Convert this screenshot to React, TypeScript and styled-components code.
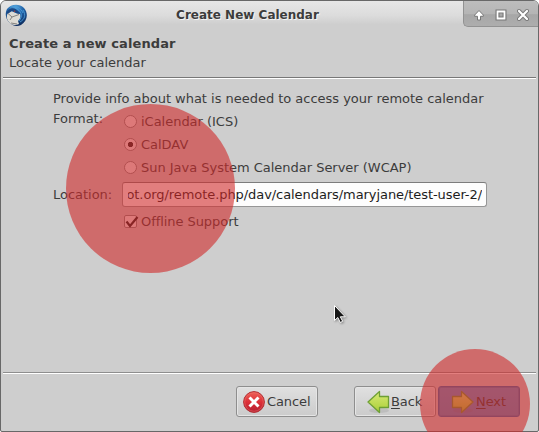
import React from "react";
import styled, { createGlobalStyle } from "styled-components";

const GlobalStyle = createGlobalStyle`
  html, body { margin: 0; padding: 0; background: #fff; overflow: hidden; }
  * { box-sizing: border-box; }
`;

const Stage = styled.div`
  position: relative;
  width: 539px;
  height: 432px;
  overflow: hidden;
`;

const Window = styled.div`
  display: flex;
  flex-direction: column;
  width: 539px;
  height: 432px;
  overflow: hidden;
  border: 1px solid #686868;
  border-radius: 6px 6px 2px 2px;
  background: #cecece;
  color: #3c3c3c;
  font: 13px/16px "DejaVu Sans", sans-serif;
  letter-spacing: -0.02px;
  white-space: nowrap;
`;

const TitleBar = styled.header`
  display: grid;
  grid-template-columns: 74px 1fr 75px;
  height: 26px;
  flex: none;
  background: linear-gradient(#e7e7e7, #dcdcdc 55%, #cecece 90%);
`;

const LogoSlot = styled.div`
  padding: 3px 0 0 4px;
  svg { display: block; }
`;

const Title = styled.div`
  font-size: 12px;
  font-weight: bold;
  line-height: 29px;
  height: 26px;
  letter-spacing: 0;
  text-align: center;
  padding-right: 43px;
  text-shadow: 1px 1px 0 #f4f4f4;
`;

const WindowControls = styled.div`
  display: flex;
  align-items: center;
  height: 26px;
  padding: 2px 0 0 8px;
  border: solid #929292;
  border-width: 0 0 1px 1px;
  border-bottom-left-radius: 5px;
  background: linear-gradient(#bdbdbd, #b5b5b5 50%, #a7a7a7 55%, #adadad);
  svg { flex: none; width: 14px; height: 14px; margin-right: 8px; }
`;

const PageHeader = styled.section`
  height: 50px;
  flex: none;
  padding: 7px 8px 0;
`;

const Heading = styled.div`
  font-weight: bold;
  line-height: 19px;
  letter-spacing: 0.1px;
`;

const Subheading = styled.div`
  line-height: 19px;
`;

const Separator = styled.div<{ $shade: string }>`
  height: 2px;
  flex: none;
  margin: 0 2px;
  border-top: 1px solid ${(p) => p.$shade};
  border-bottom: 1px solid #fff;
`;

const PageBody = styled.main`
  flex: 1;
  padding: 12px 51px 0 52px;
`;

const Intro = styled.div`
  height: 19px;
  line-height: 16px;
`;

const Form = styled.div`
  display: grid;
  grid-template-columns: 69px 365px;
  grid-template-rows: 72px 25px 28px;
`;

const FieldLabel = styled.div<{ $top: number }>`
  padding-top: ${(p) => p.$top}px;
`;

const Options = styled.div`
  padding: 0 0 0 2px;
`;

const Choice = styled.label`
  display: flex;
  align-items: center;
  height: 23px;
  gap: 4px;
`;

const Radio = styled.span<{ $checked?: boolean }>`
  width: 13px;
  height: 13px;
  border: 1px solid #858585;
  border-radius: 50%;
  background: ${(p) =>
    p.$checked ? "radial-gradient(circle, #222 2.3px, #f1f1f1 3px)" : "#f1f1f1"};
`;

const Check = styled.span`
  width: 13px;
  height: 13px;
  border: 1px solid #858585;
  border-radius: 2px;
  background: #f1f1f1;
  svg { display: block; margin: -1px 0 0 -1px; overflow: visible; }
`;

const LocationField = styled.div`
  display: flex;
  height: 25px;
  padding: 0 4px 0 5px;
  border: 1px solid #969696;
  border-top-color: #7c7c7c;
  border-radius: 3px;
  background: #fdfdfd;
  color: #1c1c1c;
`;

const FieldText = styled.div`
  display: flex;
  justify-content: flex-end;
  flex: 1;
  overflow: hidden;
  line-height: 24px;
  letter-spacing: -0.07px;
`;

const Offline = styled(Choice)`
  height: 28px;
  padding: 1px 0 0 2px;
  letter-spacing: -0.06px;
`;

const Footer = styled.footer`
  display: flex;
  height: 57px;
  flex: none;
  padding: 12px 18px 0 235px;
`;

const Button = styled.button<{ $primary?: boolean; $gap?: number }>`
  display: flex;
  align-items: center;
  width: 82px;
  height: 31px;
  margin: 0 ${(p) => p.$gap ?? 0}px 0 0;
  padding: 0 0 0 ${(p) => (p.$gap === 36 ? 6 : 12)}px;
  flex: none;
  gap: ${(p) => (p.$primary || p.$gap === 36 ? 2 : 1)}px;
  font: inherit;
  letter-spacing: -0.1px;
  color: inherit;
  border: 1px solid ${(p) => (p.$primary ? "#386fae" : "#8e8e8e")};
  border-radius: 3px;
  background: ${(p) =>
    p.$primary ? "linear-gradient(#6498d0, #5a90c8)" : "linear-gradient(#e0e0e0, #cbcbcb)"};
  box-shadow: inset 0 0 0 1px ${(p) => (p.$primary ? "#4e82bc" : "#e5e5e5")};
  svg { flex: none; }
`;

const Mnemonic = styled.span`
  text-decoration: underline;
  text-underline-offset: 2px;
  text-decoration-thickness: 1px;
`;

const Highlight = styled.div<{ $x: number; $y: number; $size: number }>`
  position: absolute;
  left: ${(p) => p.$x}px;
  top: ${(p) => p.$y}px;
  width: ${(p) => p.$size}px;
  height: ${(p) => p.$size}px;
  border-radius: 50%;
  background: rgba(208, 41, 41, 0.6);
  pointer-events: none;
`;

const Pointer = styled.svg`
  position: absolute;
  left: 333px;
  top: 304px;
  overflow: visible;
  filter: drop-shadow(1px 1px 1px rgba(0, 0, 0, 0.35));
`;

const Thunderbird = () => (
  <svg width="23" height="23" viewBox="0 0 23 23">
    <defs>
      <radialGradient id="bird" cx="45%" cy="10%" r="90%">
        <stop offset="0" stopColor="#55a5dc" />
        <stop offset=".45" stopColor="#2163a8" />
        <stop offset="1" stopColor="#0d2b5c" />
      </radialGradient>
    </defs>
    <path d="M2 5C6 0 14-1 19 4c5 6 3 13-3 17-4 2-8 1-11-2C0 15 0 9 2 5Z" fill="url(#bird)" />
    <path d="M2.5 9.5 6 7l5 2 4 1c1 3 0 5-2 7l1 3c-4 2-8 1-10-2-2-2-3-5-1.500-8.500Z" fill="#dedcd5" />
    <path d="M3 9.500 7 13l7-2.500M7 13l-2 3M6 19l6 1" fill="none" stroke="#85827e" strokeWidth="1" />
    <path d="M1.500 10C2 5 7 3 11 5l5 5-4-.5L7 7 4 9Z" fill="#1c4884" />
    <circle cx="9.500" cy="7.300" r=".8" fill="#a63f38" />
    <path d="M5 3c6-2 11 1 13 6M10 4c7 3 8 8 4 13M18 6c3 5 2 9-3 12" fill="none" stroke="#4b9bd8" strokeWidth=".9" />
  </svg>
);

const Arrow = ({ forward = false }: { forward?: boolean }) => (
  <svg width="23" height="24" viewBox="0 0 23 24">
    <defs>
      <linearGradient id="leaf" x1="0" y1="0" x2="0" y2="1">
        <stop stopColor="#d8e977" />
        <stop offset="1" stopColor="#a9cf36" />
      </linearGradient>
    </defs>
    <ellipse cx="12" cy="20.5" rx="10" ry="2.5" fill="#777" opacity=".18" />
    <path
      transform={forward ? "translate(23 0) scale(-1 1)" : undefined}
      d="M1 12 12.5 1.5v5h9v11h-9v5Z"
      fill="url(#leaf)"
      stroke="#6d9f35"
      strokeWidth="1.3"
      strokeLinejoin="round"
    />
  </svg>
);

const CancelIcon = () => (
  <svg width="22" height="22" viewBox="0 0 22 22">
    <defs>
      <linearGradient id="stop" x1="0" y1="0" x2="0" y2="1">
        <stop stopColor="#ee6258" />
        <stop offset=".5" stopColor="#dc3038" />
        <stop offset="1" stopColor="#b51e31" />
      </linearGradient>
    </defs>
    <circle cx="11" cy="11" r="10.4" fill="url(#stop)" stroke="#b02c31" />
    <circle cx="11" cy="11" r="9.3" fill="none" stroke="#ee7770" strokeWidth=".8" opacity=".6" />
    <path d="m6.500 6.500 9 9M15.500 6.500l-9 9" stroke="#fff" strokeWidth="3" />
  </svg>
);

export default function App() {
  return (
    <Stage>
      <GlobalStyle />
      <Window>
        <TitleBar>
          <LogoSlot><Thunderbird /></LogoSlot>
          <Title>Create New Calendar</Title>
          <WindowControls>
            <svg viewBox="0 0 14 14">
              <path d="M7 2.5 2.700 7v1.300h2.800V12h3V8.300h2.800V7Z" fill="#fff" stroke="#777" />
            </svg>
            <svg viewBox="0 0 14 14">
              <path d="M3.5 3.5h7v7h-7Z" fill="none" stroke="#777" strokeWidth="4" />
              <path d="M3.5 3.5h7v7h-7Z" fill="none" stroke="#fff" strokeWidth="1.8" />
            </svg>
            <svg viewBox="0 0 14 14">
              <path d="m3 3 8 8M11 3l-8 8" stroke="#777" strokeWidth="4" strokeLinecap="round" />
              <path d="m3 3 8 8M11 3l-8 8" stroke="#fff" strokeWidth="2.2" strokeLinecap="round" />
            </svg>
          </WindowControls>
        </TitleBar>
        <PageHeader>
          <Heading>Create a new calendar</Heading>
          <Subheading>Locate your calendar</Subheading>
        </PageHeader>
        <Separator $shade="#777" />
        <PageBody>
          <Intro>Provide info about what is needed to access your remote calendar</Intro>
          <Form>
            <FieldLabel $top={1}>Format:</FieldLabel>
            <Options>
              <Choice><Radio />iCalendar (ICS)</Choice>
              <Choice><Radio $checked />CalDAV</Choice>
              <Choice><Radio />Sun Java System Calendar Server (WCAP)</Choice>
            </Options>
            <FieldLabel $top={5}>Location:</FieldLabel>
            <LocationField><FieldText>ot.org/remote.php/dav/calendars/maryjane/test-user-2/</FieldText></LocationField>
            <span />
            <Offline>
              <Check>
                <svg width="14" height="14" viewBox="0 0 14 14">
                  <path d="m2.5 6.5 3.5 4.5 7.5-9" fill="none" stroke="#1c1c1c" strokeWidth="2.2" />
                </svg>
              </Check>
              Offline Support
            </Offline>
          </Form>
        </PageBody>
        <Separator $shade="#8e8e8e" />
        <Footer>
          <Button $gap={36}><CancelIcon /><span>Cancel</span></Button>
          <Button $gap={2}><Arrow /><span><Mnemonic>B</Mnemonic>ack</span></Button>
          <Button $primary><Arrow forward /><span><Mnemonic>N</Mnemonic>ext</span></Button>
        </Footer>
      </Window>
      <Pointer width="14" height="20" viewBox="0 0 14 20">
        <path d="M1.5 1.5v15l3.3-3 2.5 5 2.4-1.2-2.4-4.5h5Z" fill="#171717" stroke="#fff" />
      </Pointer>
      <Highlight $x={65.5} $y={104} $size={169} />
      <Highlight $x={420} $y={349} $size={110} />
    </Stage>
  );
}
